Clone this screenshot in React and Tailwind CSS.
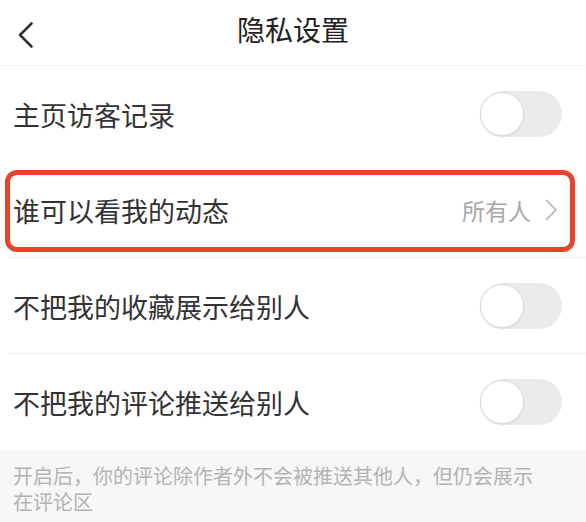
import { useState } from 'react';

const font = { fontFamily: '"Noto Sans CJK SC", "Noto Sans", sans-serif' };

function Toggle({ on, onChange }) {
  return (
    <button
      onClick={onChange}
      className={`w-[82px] h-[46px] rounded-full p-0 flex items-center ${on ? 'bg-[#fe2c55] justify-end' : 'bg-[#ebebeb] justify-start'}`}
    >
      <span className="w-[44px] h-[44px] rounded-full bg-white border border-[#dcdcdc] shadow-[0_1px_2px_rgba(0,0,0,0.08)]" />
    </button>
  );
}

function Row({ label, children, divider = true }) {
  return (
    <div className="relative h-[96px] flex items-center justify-between pl-[13px] pr-[24px]">
      <span className="text-[27px] text-[#333] leading-none">{label}</span>
      {children}
      {divider && <div className="absolute left-[8px] right-0 bottom-0 h-px bg-[#eeeeee]" />}
    </div>
  );
}

export default function App() {
  const [visitor, setVisitor] = useState(false);
  const [favs, setFavs] = useState(false);
  const [comments, setComments] = useState(false);

  return (
    <div className="w-[586px] h-[522px] bg-white overflow-hidden" style={font}>
      {/* header */}
      <div className="relative h-[66px] flex items-center justify-center border-b border-[#f3f3f3]">
        <button className="absolute left-[16px] top-[21px]">
          <svg width="20" height="28" viewBox="0 0 20 28" fill="none">
            <path d="M15.5 2.5 L4 14 L15.5 25.5" stroke="#333" strokeWidth="2.6" strokeLinecap="round" strokeLinejoin="round" />
          </svg>
        </button>
        <h1 className="text-[28px] font-normal text-[#222] leading-none -mt-[8px]">隐私设置</h1>
      </div>

      <Row label="主页访客记录" divider={false}>
        <Toggle on={visitor} onChange={() => setVisitor(!visitor)} />
      </Row>

      <div className="relative">
        <Row label="谁可以看我的动态">
          <div className="flex items-center gap-[14px] pr-[4px]">
            <span className="text-[23px] text-[#a8a8a8] leading-none">所有人</span>
            <svg width="13" height="22" viewBox="0 0 13 22" fill="none">
              <path d="M1.5 1.5 L11 11 L1.5 20.5" stroke="#bdbdbd" strokeWidth="1.8" strokeLinecap="round" strokeLinejoin="round" />
            </svg>
          </div>
        </Row>
        <div className="absolute left-[5px] right-[11px] top-[8px] bottom-[6px] border-[5px] border-[#e8432b] rounded-[12px] pointer-events-none" />
      </div>

      <Row label="不把我的收藏展示给别人">
        <Toggle on={favs} onChange={() => setFavs(!favs)} />
      </Row>

      <Row label="不把我的评论推送给别人" divider={false}>
        <Toggle on={comments} onChange={() => setComments(!comments)} />
      </Row>

      <div className="bg-[#f7f7f7] h-full pt-[13px] pl-[13px] pr-[50px]">
        <p className="text-[20px] leading-[26px] text-[#b3b3b3]">
          开启后，你的评论除作者外不会被推送其他人，但仍会展示在评论区
        </p>
      </div>
    </div>
  );
}
